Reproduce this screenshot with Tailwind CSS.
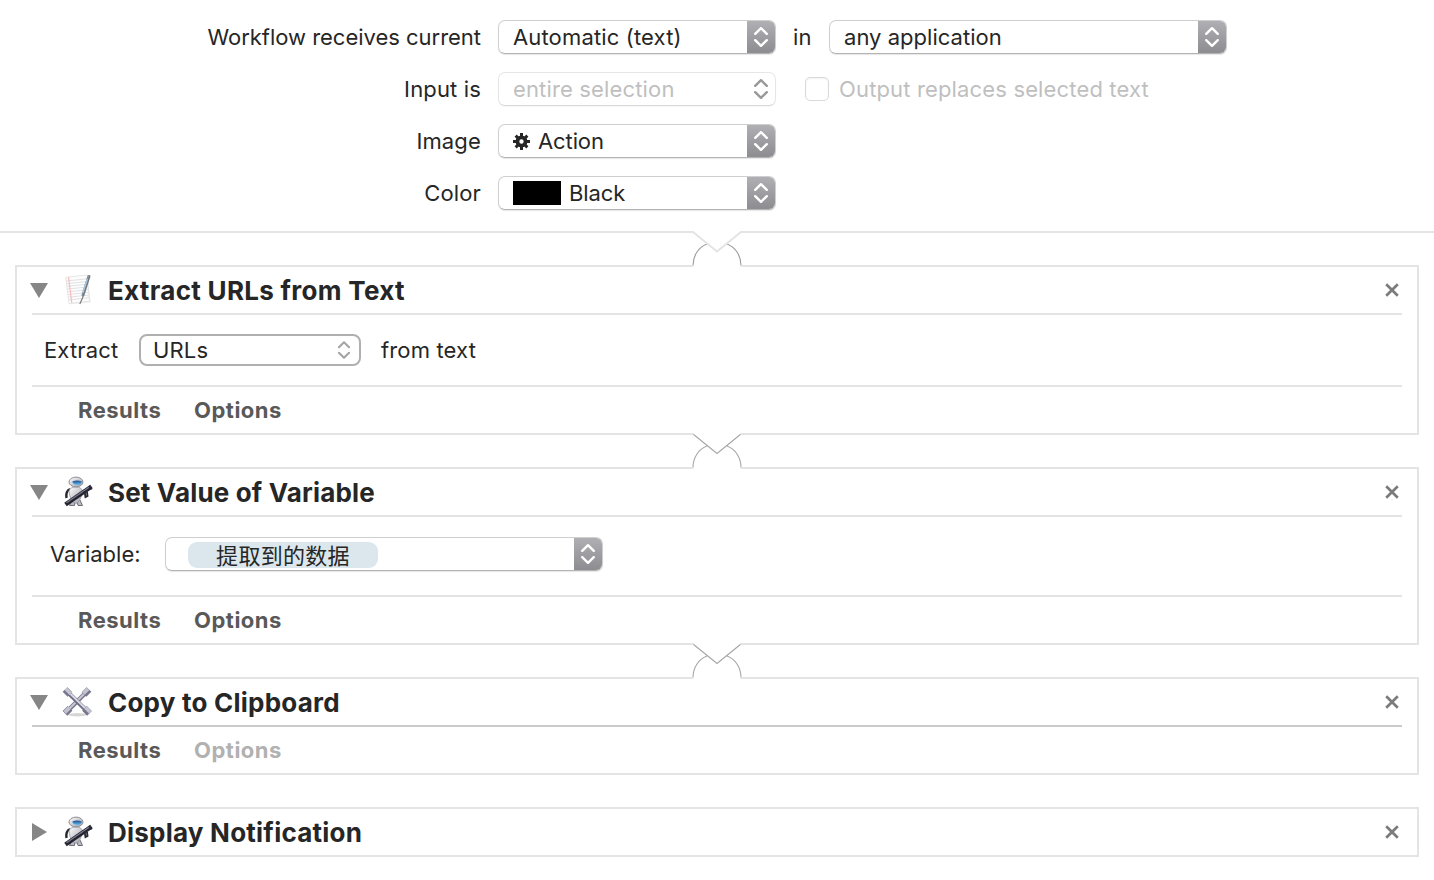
<!DOCTYPE html>
<html lang="en">
<head>
<meta charset="utf-8">
<title>Automator workflow</title>
<script src="https://cdn.jsdelivr.net/npm/@tailwindcss/browser@4"></script>
</head>
<body class="bg-white text-[#262626] text-[22px] leading-[34px] tracking-[0.15px] font-['Inter','Noto_Sans_CJK_SC',sans-serif] w-[1434px] h-[880px] overflow-hidden whitespace-nowrap">

<svg class="absolute size-0">
  <defs>
    <linearGradient id="steel" x1="0" y1="0" x2="1" y2="1"><stop offset="0" stop-color="#fff"/><stop offset="1" stop-color="#9c9ca6"/></linearGradient>
    <linearGradient id="eye" x1="0" y1="0" x2="0" y2="1"><stop offset="0" stop-color="#1d4a8c"/><stop offset="1" stop-color="#62c1fb"/></linearGradient>
    <symbol id="chevrons" viewBox="0 0 16 22"><path d="M2.200 7.800 8 2.200l5.800 5.600M2.200 14.200 8 19.800l5.800-5.600" fill="none" stroke="currentColor" stroke-width="2.400" stroke-linecap="round" stroke-linejoin="round"/></symbol>
    <symbol id="close" viewBox="0 0 14 14"><path d="M1.200 1.200 12.800 12.800M12.800 1.200 1.200 12.800" stroke="#7b7b7b" stroke-width="2.700" fill="none"/></symbol>
    <symbol id="robot" viewBox="0 0 32 32">
      <path d="M8 13Q3.500 15 4.500 22" fill="none" stroke="#26262f" stroke-width="2.400"/>
      <path d="M9 25 7.500 29.500h5L13 26M15 26l1 3.500h4.500L18 24" fill="#b9b9c2" stroke="#55555f" stroke-width=".8"/>
      <path d="M7 15Q8 11 14 11t6.500 4.500Q19 25 14 27.500 8 26 7 15Z" fill="url(#steel)" stroke="#8d8d98" stroke-width=".7"/>
      <ellipse cx="14" cy="6" rx="7" ry="4.900" fill="url(#steel)" stroke="#85858d" stroke-width=".9"/>
      <path d="M10.300 5.500Q15 3.600 19.800 5.500 19.300 8.900 15.300 9 11 8.700 10.300 5.500Z" fill="url(#eye)"/>
      <path d="M3.500 28.500 29.500 10.500" stroke="#24242f" stroke-width="4.400"/>
      <path d="M4.500 26.700 28.500 10.200" stroke="#7d7d94" stroke-width="1.200"/>
      <path d="M22.500 15l1 6 2-1-.5-4M27 10l2.500 3.500" stroke="#292936" stroke-width="1.900" fill="none"/>
    </symbol>
    <symbol id="wrench" viewBox="0 0 32 32">
      <ellipse cx="15.500" cy="28.800" rx="9" ry="1.700" fill="#000" opacity=".16"/>
      <g fill="none">
        <path d="M4 26.500 26 4.500" stroke="#77758f" stroke-width="4.400"/>
        <path d="M4 26 26 4" stroke="#c7c7d2" stroke-width="2.200"/>
        <path d="M3 27.300 8 22.300M22 8.500 27 3.500" stroke="#77758f" stroke-width="6.600"/>
        <path d="M2.800 26.300 7.500 21.600M21.300 7.500 26 2.800" stroke="#c3c3cd" stroke-width="3.800"/>
        <path d="M5 5.500 27 27" stroke="#6c6a86" stroke-width="4.400"/>
        <path d="M5.500 5 27.500 26.500" stroke="#d9d9e1" stroke-width="2"/>
        <path d="M3 3.500 8 8.500M22.500 22.300 27.500 27.300" stroke="#77758f" stroke-width="6.600"/>
        <path d="M3.800 2.800 8.800 7.800M23.500 21.600 28.200 26.300" stroke="#c6c6d0" stroke-width="3.600"/>
      </g>
    </symbol>
    <symbol id="notepad" viewBox="0 0 32 32">
      <path d="M4 4 24.500 1.500 29 28.500 8 30.500Z" fill="#000" opacity=".06"/>
      <path d="M3.700 3.300 25.500 1 27.500 27 7 29.500Z" fill="#fdfdfd" stroke="#dcdcdc" stroke-width=".7"/>
      <path d="M4.300 7l21-2.200M4.600 9.700l21-2.200M4.900 12.400l21-2.200M5.200 15.100l21-2.200M5.500 17.800l21-2.200M5.800 20.500l21-2.200M6.100 23.200l21-2.200M6.400 25.900l21-2.200" stroke="#dcdee0" stroke-width=".9"/>
      <path d="M6.500 3.200 9.800 29" stroke="#f8bcbc" stroke-width="1.200"/>
      <path d="M26.800 2.500 21 21" stroke="#8393a2" stroke-width="3" stroke-linecap="round"/>
      <path d="M25.500 5 21 19" stroke="#a9cbe5" stroke-width="1.500"/>
      <path d="M28 1.500 20.500 24 17.800 30" fill="none" stroke="#777" stroke-width="1.100"/>
    </symbol>
  </defs>
</svg>

<!-- Workflow input settings -->
<header class="h-[233px] border-b-2 border-[#e4e4e4] pt-5 flex flex-col gap-[18px]">
  <div class="flex h-[34px]">
    <div class="w-[481px] text-right tracking-[-0.02px]"><span>Workflow receives current</span></div>
    <div class="ml-[17px] w-[278px] h-[34px] rounded-[7px] border border-[#cfcfcf] border-b-[#b4b4b4] shadow-[0_1px_1px_#0000001a] flex justify-between overflow-hidden">
      <span class="pl-3.5 leading-8">Automatic (text)</span>
      <span class="w-[29px] -my-px -mr-px pr-px bg-linear-to-b from-[#b1b0b4] to-[#8c8b90] text-white flex items-center justify-center"><svg class="w-4 h-[22px]"><use href="#chevrons"/></svg></span>
    </div>
    <span class="ml-[17px] w-[36px]">in</span>
    <div class="w-[398px] h-[34px] rounded-[7px] border border-[#cfcfcf] border-b-[#b4b4b4] shadow-[0_1px_1px_#0000001a] flex justify-between overflow-hidden">
      <span class="pl-3.5 leading-8 tracking-[0.03px]">any application</span>
      <span class="w-[29px] -my-px -mr-px pr-px bg-linear-to-b from-[#b1b0b4] to-[#8c8b90] text-white flex items-center justify-center"><svg class="w-4 h-[22px]"><use href="#chevrons"/></svg></span>
    </div>
  </div>
  <div class="flex h-[34px]">
    <div class="w-[481px] text-right"><span>Input is</span></div>
    <div class="ml-[17px] w-[278px] h-[34px] rounded-[7px] border border-[#e6e6e6] border-b-[#d9d9d9] shadow-[0_1px_1px_#0000000a] flex justify-between items-center text-[#bfbfbf]">
      <span class="pl-3.5 leading-8">entire selection</span>
      <span class="w-[29px] -mr-px pr-px text-[#989898] flex items-center justify-center"><svg class="w-4 h-[22px]"><use href="#chevrons"/></svg></span>
    </div>
    <span class="ml-[29px] mt-[5px] size-6 rounded-[5px] border border-[#d9d9d9] shadow-[inset_0_1px_2px_#0000000d]"></span>
    <span class="ml-2.5 text-[#bfbfbf]">Output replaces selected text</span>
  </div>
  <div class="flex h-[34px]">
    <div class="w-[481px] text-right"><span>Image</span></div>
    <div class="ml-[17px] w-[278px] h-[34px] rounded-[7px] border border-[#cfcfcf] border-b-[#b4b4b4] shadow-[0_1px_1px_#0000001a] flex justify-between overflow-hidden">
      <span class="pl-3.5 leading-8 flex items-center gap-2">
        <svg class="w-[17px] h-[17px]" viewBox="-9 -9 18 18"><circle r="4.300" fill="none" stroke="#262626" stroke-width="4"/><path d="M0-5V-9M0 5V9M-5 0H-9M5 0H9M3.500-3.500 6.200-6.200M-3.500 3.500-6.200 6.200M3.500 3.500 6.200 6.200M-3.500-3.500-6.200-6.200" stroke="#262626" stroke-width="3.200"/></svg>
        <span class="tracking-[-0.1px]">Action</span></span>
      <span class="w-[29px] -my-px -mr-px pr-px bg-linear-to-b from-[#b1b0b4] to-[#8c8b90] text-white flex items-center justify-center"><svg class="w-4 h-[22px]"><use href="#chevrons"/></svg></span>
    </div>
  </div>
  <div class="flex h-[34px]">
    <div class="w-[481px] text-right"><span>Color</span></div>
    <div class="ml-[17px] w-[278px] h-[34px] rounded-[7px] border border-[#cfcfcf] border-b-[#b4b4b4] shadow-[0_1px_1px_#0000001a] flex justify-between overflow-hidden">
      <span class="pl-3.5 leading-8 flex items-center gap-2"><span class="w-12 h-6 bg-black"></span><span class="tracking-[-0.1px]">Black</span></span>
      <span class="w-[29px] -my-px -mr-px pr-px bg-linear-to-b from-[#b1b0b4] to-[#8c8b90] text-white flex items-center justify-center"><svg class="w-4 h-[22px]"><use href="#chevrons"/></svg></span>
    </div>
  </div>
</header>

<main class="px-[15px]">
  <div class="h-8 flex justify-center">
    <svg class="relative -mt-0.5 w-[52px] h-9 shrink-0" viewBox="0 0 52 36"><path d="M2 0H50V36H2Z" fill="#fff"/><path d="M2 34.500C2 24 8 16 16 13M50 34.500C50 24 44 16 36 13" fill="none" stroke="#9a9a9a" stroke-width="1.100"/><path d="M0 1H2L26 20.500 50 1H52M0 35H2.500M49.500 35H52" fill="none" stroke="#e4e4e4" stroke-width="2"/></svg>
  </div>

  <section class="h-[170px] border-2 border-[#e4e4e4] px-[15px]">
    <div class="h-12 border-b-2 border-[#e4e4e4] flex items-center">
      <svg class="w-[18px] h-[15px] -ml-0.5" viewBox="0 0 18 15"><path d="M0 0H18L9 15Z" fill="#868686"/></svg>
      <svg class="size-8 ml-3.5 mr-[14px]"><use href="#notepad"/></svg>
      <h2 class="pt-0.5 text-[26px] font-bold tracking-[0.31px]">Extract URLs from Text</h2>
      <svg class="size-3.5 ml-auto mr-[3px]"><use href="#close"/></svg>
    </div>
    <div class="h-[72px] border-b-2 border-[#e4e4e4] flex items-center pl-3">
      <span class="w-[95px]">Extract</span>
      <div class="w-[222px] h-8 rounded-[8px] border-2 border-[#b0b0b0] flex items-center justify-between pl-3 pr-2"><span>URLs</span><svg class="w-[14px] h-5 text-[#a4a4a4]"><use href="#chevrons"/></svg></div>
      <span class="ml-5">from text</span>
    </div>
    <div class="h-[46px] flex items-center pl-[46px] font-bold tracking-[0.5px] text-[#595959]"><span class="w-[116px]">Results</span><span>Options</span></div>
  </section>

  <div class="h-8 flex justify-center">
    <svg class="relative -mt-0.5 w-[52px] h-9 shrink-0" viewBox="0 0 52 36"><path d="M2 0H50V36H2Z" fill="#fff"/><path d="M2 34.500C2 24 8 16 16 13M50 34.500C50 24 44 16 36 13M2 1 26 20.500 50 1" fill="none" stroke="#a6a6a6" stroke-width="1.100"/><path d="M0 1H2.500M49.500 1H52M0 35H2.500M49.500 35H52" stroke="#e4e4e4" stroke-width="2"/></svg>
  </div>

  <section class="h-[178px] border-2 border-[#e4e4e4] px-[15px]">
    <div class="h-12 border-b-2 border-[#e4e4e4] flex items-center">
      <svg class="w-[18px] h-[15px] -ml-0.5" viewBox="0 0 18 15"><path d="M0 0H18L9 15Z" fill="#868686"/></svg>
      <svg class="size-8 ml-3.5 mr-[14px]"><use href="#robot"/></svg>
      <h2 class="pt-0.5 text-[26px] font-bold tracking-[0.17px]">Set Value of Variable</h2>
      <svg class="size-3.5 ml-auto mr-[3px]"><use href="#close"/></svg>
    </div>
    <div class="h-20 border-b-2 border-[#e4e4e4] flex items-start pt-5 pl-[18px]">
      <span class="w-[115px] tracking-[-0.02px]">Variable:</span>
      <div class="w-[438px] h-[34px] rounded-[7px] border border-[#cfcfcf] border-b-[#b4b4b4] shadow-[0_1px_1px_#0000001a] flex justify-between overflow-hidden">
        <span class="ml-[22px] mt-1 w-[190px] h-[26px] rounded-[9px] bg-[#dce7ed] text-center leading-[28px] tracking-[0.3px]">提取到的数据</span>
        <span class="w-[29px] -my-px -mr-px pr-px bg-linear-to-b from-[#b1b0b4] to-[#8c8b90] text-white flex items-center justify-center"><svg class="w-4 h-[22px]"><use href="#chevrons"/></svg></span>
      </div>
    </div>
    <div class="h-[46px] flex items-center pl-[46px] font-bold tracking-[0.5px] text-[#595959]"><span class="w-[116px]">Results</span><span>Options</span></div>
  </section>

  <div class="h-8 flex justify-center">
    <svg class="relative -mt-0.5 w-[52px] h-9 shrink-0" viewBox="0 0 52 36"><path d="M2 0H50V36H2Z" fill="#fff"/><path d="M2 34.500C2 24 8 16 16 13M50 34.500C50 24 44 16 36 13M2 1 26 20.500 50 1" fill="none" stroke="#a6a6a6" stroke-width="1.100"/><path d="M0 1H2.500M49.500 1H52M0 35H2.500M49.500 35H52" stroke="#e4e4e4" stroke-width="2"/></svg>
  </div>

  <section class="h-[98px] border-2 border-[#e4e4e4] px-[15px]">
    <div class="h-12 border-b-2 border-[#cbcbcb] flex items-center">
      <svg class="w-[18px] h-[15px] -ml-0.5" viewBox="0 0 18 15"><path d="M0 0H18L9 15Z" fill="#868686"/></svg>
      <svg class="size-8 ml-3.5 mr-[14px]"><use href="#wrench"/></svg>
      <h2 class="pt-0.5 text-[26px] font-bold tracking-[0.22px]">Copy to Clipboard</h2>
      <svg class="size-3.5 ml-auto mr-[3px]"><use href="#close"/></svg>
    </div>
    <div class="h-[46px] flex items-center pl-[46px] font-bold tracking-[0.5px] text-[#595959]"><span class="w-[116px]">Results</span><span class="text-[#b1b1b1]">Options</span></div>
  </section>

  <section class="mt-8 h-[50px] border-2 border-[#e4e4e4] px-[15px]">
    <div class="h-[46px] flex items-center">
      <svg class="w-[15px] h-[18px]" viewBox="0 0 15 18"><path d="M0 0V18L15 9Z" fill="#868686"/></svg>
      <svg class="size-8 ml-[15px] mr-[14px]"><use href="#robot"/></svg>
      <h2 class="pt-0.5 text-[26px] font-bold tracking-[0.23px]">Display Notification</h2>
      <svg class="size-3.5 ml-auto mr-[3px]"><use href="#close"/></svg>
    </div>
  </section>
</main>
</body>
</html>
